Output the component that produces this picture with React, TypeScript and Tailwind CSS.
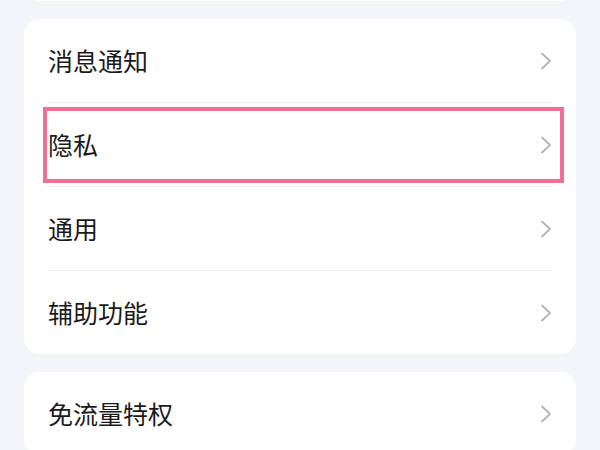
const GROUPS: { id: string; items: string[] }[] = [
  { id: 'main', items: ['消息通知', '隐私', '通用', '辅助功能'] },
  { id: 'extra', items: ['免流量特权'] },
];

function Chevron() {
  return (
    <svg width="12" height="18" viewBox="0 0 12 18" fill="none" className="shrink-0">
      <polyline points="2,1.5 10,9 2,16.5" stroke="#b4b4b8" strokeWidth="1.8" strokeLinecap="round" strokeLinejoin="round" />
    </svg>
  );
}

function Row({ label, highlight }: { label: string; highlight?: boolean }) {
  return (
    <div className="relative flex items-center justify-between h-[83px] pr-[24px]">
      <span className="text-[25px] leading-none text-[#1a1a1a]">{label}</span>
      <Chevron />
      {highlight && (
        <div className="absolute left-[-5px] right-[12px] top-[4px] bottom-[3px] border-4 border-[#ef7095] pointer-events-none" />
      )}
    </div>
  );
}

export default function App() {
  return (
    <div
      className="w-[600px] h-[450px] overflow-hidden bg-[#f4f5f9] px-[24px] flex flex-col gap-[18px]"
      style={{ fontFamily: '"Noto Sans CJK SC", "Noto Sans", sans-serif' }}
    >
      {/* previous group, scrolled mostly out of view */}
      <div className="bg-white rounded-[16px] h-[84px] mt-[-83px] shrink-0" />

      {GROUPS.map((group) => (
        <div key={group.id} className="bg-white rounded-[16px] pl-[24px] shrink-0">
          {group.items.map((item, i) => (
            <div key={item}>
              {i > 0 && <div className="h-px bg-[#efeff1] mr-[24px]" />}
              <Row label={item} highlight={item === '隐私'} />
            </div>
          ))}
        </div>
      ))}
    </div>
  );
}
